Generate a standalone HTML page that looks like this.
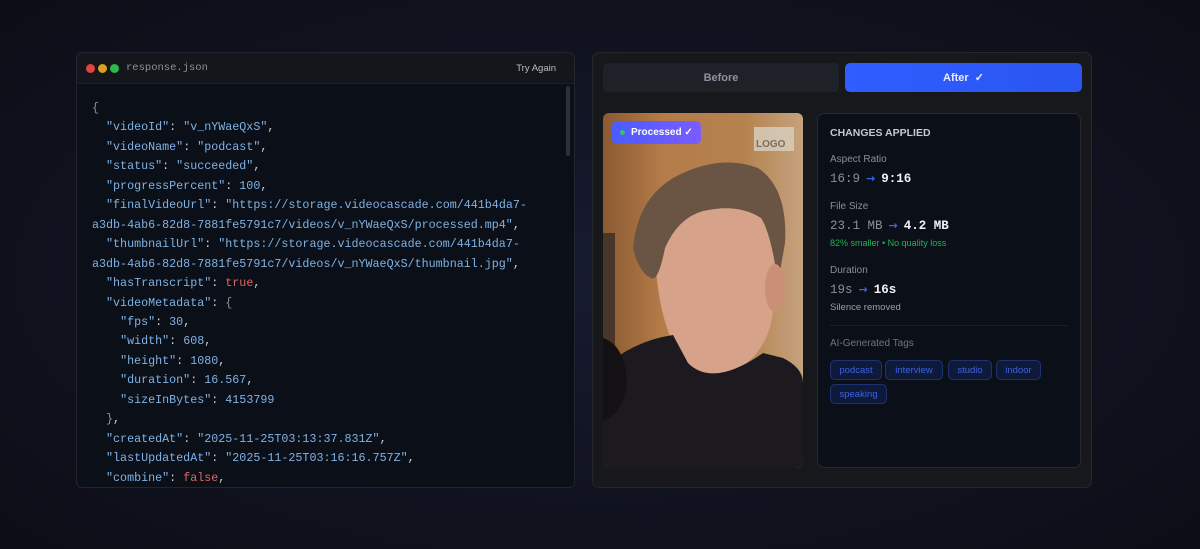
<!DOCTYPE html>
<html><head><style>
*{margin:0;padding:0;box-sizing:border-box}
body{width:1200px;height:549px;overflow:hidden;background:radial-gradient(ellipse 75% 80% at 50% 50%,#171b30 0%,#10121f 55%,#0b0c14 100%);font-family:"Liberation Sans",sans-serif;position:relative}
.lp{position:absolute;left:76px;top:52px;width:499px;height:436px;background:#0b0f17;border:1px solid #22252d;border-radius:6px;overflow:hidden}
.hd{height:31px;background:#14161c;border-bottom:1px solid #1c1f26;position:relative}
.dot{position:absolute;top:11px;width:9px;height:9px;border-radius:50%}
.fn{position:absolute;left:49px;top:9px;font:10.5px "Liberation Mono",monospace;color:#8b919c}
.ta{position:absolute;right:18px;top:10px;font-size:9.5px;color:#b8bcc4}
.code{position:absolute;left:15px;top:46px;font:11.7px/19.45px "Liberation Mono",monospace;color:#c9d1d9;white-space:pre}
.k{color:#7fb2e5}.r{color:#e2675f}.p{color:#8b929c}
.sb{position:absolute;right:4px;top:33px;width:4px;height:70px;background:#2c3038;border-radius:2px}
.rp{position:absolute;left:592px;top:52px;width:500px;height:436px;background:#17181c;border:1px solid #25272d;border-radius:7px}
.btn{position:absolute;top:10px;height:29px;border-radius:5px;font-size:11px;font-weight:bold;display:flex;align-items:center;justify-content:center}
.photo{position:absolute;left:10px;top:60px;width:200px;height:355px;border-radius:6px;overflow:hidden}
.card{position:absolute;left:224px;top:60px;width:264px;height:355px;background:#0b0f17;border:1px solid #25282f;border-radius:7px;padding:0 12px}
.lbl{position:absolute;left:12px;font-size:10px;color:#8a8f99}
.val{position:absolute;left:12px;font:12.5px "Liberation Mono",monospace;color:#8a909a}
.val b{color:#f2f3f5}.val i{font-style:normal;color:#3d63f0;font-size:11px;font-weight:bold;margin:0 6px;font-family:"DejaVu Sans",sans-serif}
.tag{position:absolute;height:20px;border:1px solid #1e3270;background:#0f1a3a;border-radius:5px;color:#3b63e6;font-size:9.5px;display:flex;align-items:center;justify-content:center}
</style></head><body>
<div class="lp">
<div class="hd"><div class="dot" style="left:9px;background:#e0443e"></div><div class="dot" style="left:21px;background:#d9a21b"></div><div class="dot" style="left:33px;background:#2eb84a"></div><div class="fn">response.json</div><div class="ta">Try Again</div></div>
<div class="sb"></div>
<div class="code"><span class="p">{</span>
  <span class="k">"videoId"</span>: <span class="k">"v_nYWaeQxS"</span>,
  <span class="k">"videoName"</span>: <span class="k">"podcast"</span>,
  <span class="k">"status"</span>: <span class="k">"succeeded"</span>,
  <span class="k">"progressPercent"</span>: <span class="k">100</span>,
  <span class="k">"finalVideoUrl"</span>: <span class="k">"https://storage.videocascade.com/441b4da7-</span>
<span class="k">a3db-4ab6-82d8-7881fe5791c7/videos/v_nYWaeQxS/processed.mp4"</span>,
  <span class="k">"thumbnailUrl"</span>: <span class="k">"https://storage.videocascade.com/441b4da7-</span>
<span class="k">a3db-4ab6-82d8-7881fe5791c7/videos/v_nYWaeQxS/thumbnail.jpg"</span>,
  <span class="k">"hasTranscript"</span>: <span class="r">true</span>,
  <span class="k">"videoMetadata"</span>: <span class="p">{</span>
    <span class="k">"fps"</span>: <span class="k">30</span>,
    <span class="k">"width"</span>: <span class="k">608</span>,
    <span class="k">"height"</span>: <span class="k">1080</span>,
    <span class="k">"duration"</span>: <span class="k">16.567</span>,
    <span class="k">"sizeInBytes"</span>: <span class="k">4153799</span>
  <span class="p">}</span>,
  <span class="k">"createdAt"</span>: <span class="k">"2025-11-25T03:13:37.831Z"</span>,
  <span class="k">"lastUpdatedAt"</span>: <span class="k">"2025-11-25T03:16:16.757Z"</span>,
  <span class="k">"combine"</span>: <span class="r">false</span>,</div>
</div>
<div class="rp">
<div class="btn" style="left:10px;width:236px;background:#1f2128;color:#8d929c">Before</div>
<div class="btn" style="left:252px;width:237px;background:linear-gradient(90deg,#2f5dff,#2a55f0);color:#e8ecff">After&nbsp;&nbsp;✓</div>
<div class="photo">
<svg width="200" height="355" viewBox="0 0 200 355">
<defs><linearGradient id="bg" x1="0" x2="1"><stop offset="0" stop-color="#8a5a32"/><stop offset=".3" stop-color="#b47c48"/><stop offset=".7" stop-color="#b5824f"/><stop offset="1" stop-color="#c6a27e"/></linearGradient></defs>
<rect width="200" height="355" fill="url(#bg)"/>
<rect x="0" y="120" width="12" height="190" fill="#4a3628"/>
<path d="M55 175 Q48 120 60 95 Q80 70 120 72 Q160 78 170 115 Q178 160 168 210 Q160 245 125 262 Q100 270 82 250 Q62 225 55 175Z" fill="#d6a38a"/>
<path d="M30 135 Q35 80 80 60 Q120 42 155 55 Q185 75 182 130 L175 170 Q168 120 158 105 Q135 90 100 98 Q75 105 62 135 Q55 170 48 165 Q36 160 30 135Z" fill="#6a5444"/>
<ellipse cx="172" cy="175" rx="10" ry="24" fill="#c99075"/>
<path d="M85 250 Q110 275 160 240 L180 245 Q200 255 200 270 L200 355 L0 355 L0 255 Q30 228 70 222 Z" fill="#1c1a1e"/>
<path d="M0 225 Q22 232 24 270 Q20 300 0 308Z" fill="#131114"/>
<rect x="151" y="14" width="40" height="24" fill="#d8cfc0" opacity=".8"/>
<text x="153" y="34" font-family="Liberation Sans" font-size="10" font-weight="bold" fill="#7a6e60">LOGO</text>
</svg>
<div style="position:absolute;left:9px;top:8px;width:89px;height:23px;border-radius:5px;background:linear-gradient(90deg,#4a5cff,#7a5cff);color:#fff;font-size:10px;font-weight:bold;display:flex;align-items:center;padding-left:19px">Processed ✓<span style="position:absolute;left:8px;top:9px;width:5px;height:5px;border-radius:50%;background:#2ec27e"></span></div>
</div>
<div class="card">
<div style="position:absolute;left:12px;top:13px;font-size:10.5px;font-weight:bold;color:#c4c8d0">CHANGES APPLIED</div>
<div class="lbl" style="top:40px">Aspect Ratio</div>
<div class="val" style="top:58px">16:9<i>→</i><b>9:16</b></div>
<div class="lbl" style="top:87px">File Size</div>
<div class="val" style="top:105px">23.1 MB<i>→</i><b>4.2 MB</b></div>
<div class="lbl" style="top:124px;font-size:9px;color:#22b455">82% smaller • No quality loss</div>
<div class="lbl" style="top:151px">Duration</div>
<div class="val" style="top:169px">19s<i>→</i><b>16s</b></div>
<div class="lbl" style="top:188px;font-size:9.5px;color:#9aa0aa">Silence removed</div>
<div style="position:absolute;left:12px;right:12px;top:211px;height:1px;background:#1d2028"></div>
<div class="lbl" style="top:224px;color:#6f7580">AI-Generated Tags</div>
<div class="tag" style="left:12px;top:246px;width:52px">podcast</div>
<div class="tag" style="left:67px;top:246px;width:58px">interview</div>
<div class="tag" style="left:130px;top:246px;width:44px">studio</div>
<div class="tag" style="left:178px;top:246px;width:45px">indoor</div>
<div class="tag" style="left:12px;top:270px;width:57px">speaking</div>
</div>
</div>
</body></html>
